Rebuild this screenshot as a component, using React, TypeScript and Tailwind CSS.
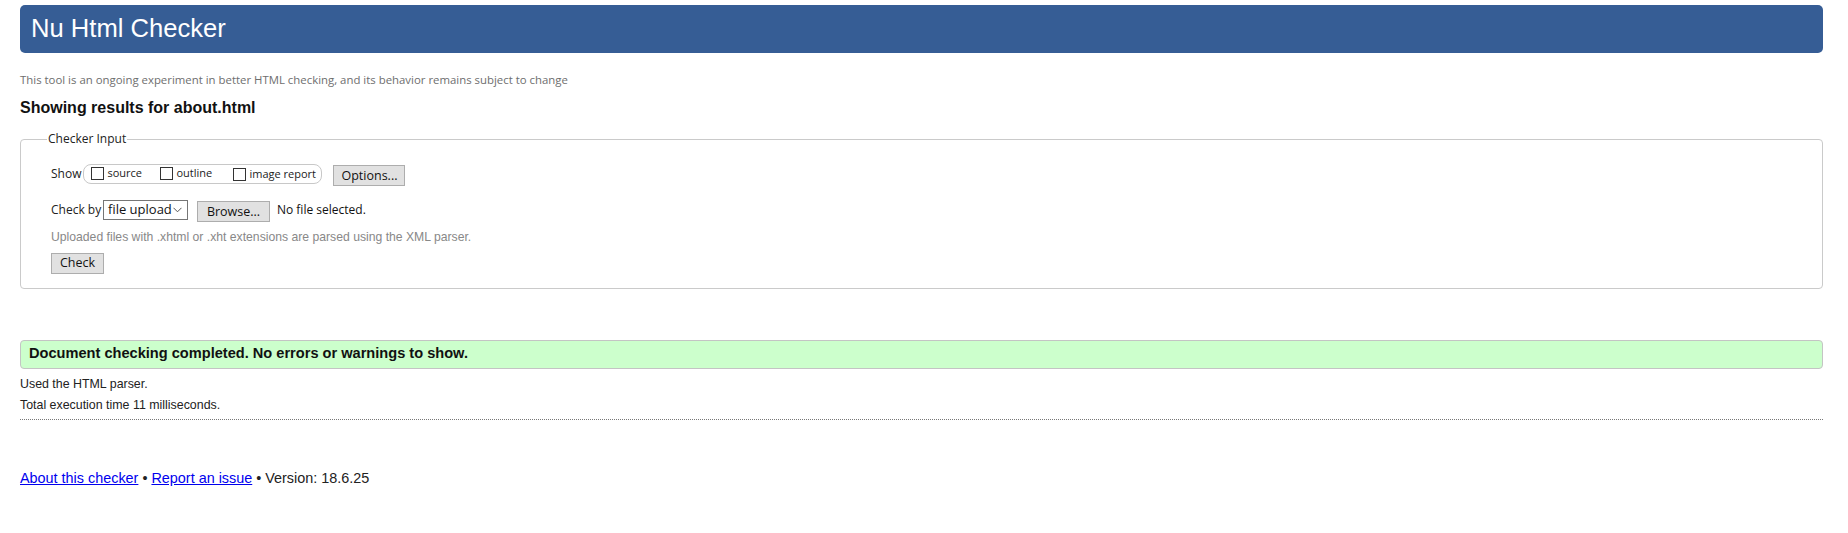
const ui = "font-['Segoe_UI','Open_Sans',sans-serif]";
const arial = "font-['Liberation_Sans',Arial,sans-serif]";

function Box({ label }: { label: string }) {
  return (
    <span className="inline-flex items-center">
      <span className="w-[13px] h-[13px] border border-[#333] bg-white mr-[3px]" />
      <span className="text-[11px] text-[#222]">{label}</span>
    </span>
  );
}

function Btn({ children, w }: { children: React.ReactNode; w: string }) {
  return (
    <span
      className={`${w} h-[21px] inline-flex items-center justify-center bg-[#e1e1e1] border border-[#adadad] text-[12.5px] text-[#111] whitespace-nowrap`}
    >
      {children}
    </span>
  );
}

export default function App() {
  return (
    <div className={`min-h-[533px] bg-white pl-[20px] pr-[25px] pt-[5px] ${arial}`}>
      <header className="h-[48px] bg-[#365d95] rounded-[5px] flex items-center pl-[11px]">
        <h1 className="text-[25.6px] text-white leading-none">Nu Html Checker</h1>
      </header>

      <p className={`mt-[19px] text-[11.4px] leading-[16px] text-[#6e6e6e] ${ui}`}>
        This tool is an ongoing experiment in better HTML checking, and its behavior remains subject to change
      </p>

      <h2 className="mt-[10px] text-[16px] leading-[20px] font-bold text-[#111]">Showing results for about.html</h2>

      <fieldset className="mt-[13px] border border-[#cacaca] rounded-[4px] pl-[26px] pr-4 pt-[16px] pb-[14px]">
        <legend className={`px-[1px] text-[12px] leading-[16px] text-[#222] ${ui}`}>Checker Input</legend>

        <div className="pl-[4px]">
          <div className={`flex items-center h-[22px] ${ui}`}>
            <span className="text-[12px] text-[#222] mr-[2px]">Show</span>
            <span className="w-[239px] h-[20px] border border-[#c8c8c8] rounded-[8px] flex items-center pl-[7px]">
              <span className="w-[69px]">
                <Box label="source" />
              </span>
              <span className="w-[73px]">
                <Box label="outline" />
              </span>
              <Box label="image report" />
            </span>
            <span className="ml-[11px]">
              <Btn w="w-[72px]">Options...</Btn>
            </span>
          </div>

          <div className={`flex items-center h-[22px] mt-[14px] ${ui}`}>
            <span className="w-[52px] text-[12px] text-[#222] whitespace-nowrap">Check by</span>
            <span className="w-[85px] h-[20px] border border-[#767676] flex items-center justify-between pl-[4px] pr-[5px]">
              <span className="text-[13px] text-[#111] whitespace-nowrap">file upload</span>
              <svg width="9" height="6" viewBox="0 0 9 6" fill="none" stroke="#555" strokeWidth="1">
                <path d="M0.5 0.8 L4.5 4.8 L8.5 0.8" />
              </svg>
            </span>
            <span className="ml-[9px]">
              <Btn w="w-[73px]">Browse...</Btn>
            </span>
            <span className="ml-[7px] text-[12px] text-[#111] whitespace-nowrap">No file selected.</span>
          </div>

          <p className="mt-[8px] text-[12.2px] leading-[16px] text-[#888]">
            Uploaded files with .xhtml or .xht extensions are parsed using the XML parser.
          </p>

          <div className={`mt-[4px] ${ui}`}>
            <Btn w="w-[53px]">Check</Btn>
          </div>
        </div>
      </fieldset>

      <div className="mt-[51px] h-[29px] bg-[#ccffcc] border border-[#c4c4c4] rounded-[4px] flex items-center pl-[8px]">
        <span className="text-[14.6px] font-bold text-[#111]">Document checking completed. No errors or warnings to show.</span>
      </div>

      <p className="mt-[5px] text-[12.4px] leading-[21px] text-[#222]">Used the HTML parser.</p>
      <p className="text-[12.4px] leading-[21px] text-[#222]">Total execution time 11 milliseconds.</p>

      <div className="mt-[3px] border-t border-dotted border-[#777]" />

      <footer className="mt-[49px] text-[14.4px] leading-[18px] text-[#222]">
        <a href="#" className="text-[#0000ee] underline">About this checker</a>
        {" • "}
        <a href="#" className="text-[#0000ee] underline">Report an issue</a>
        {" • Version: 18.6.25"}
      </footer>
    </div>
  );
}
